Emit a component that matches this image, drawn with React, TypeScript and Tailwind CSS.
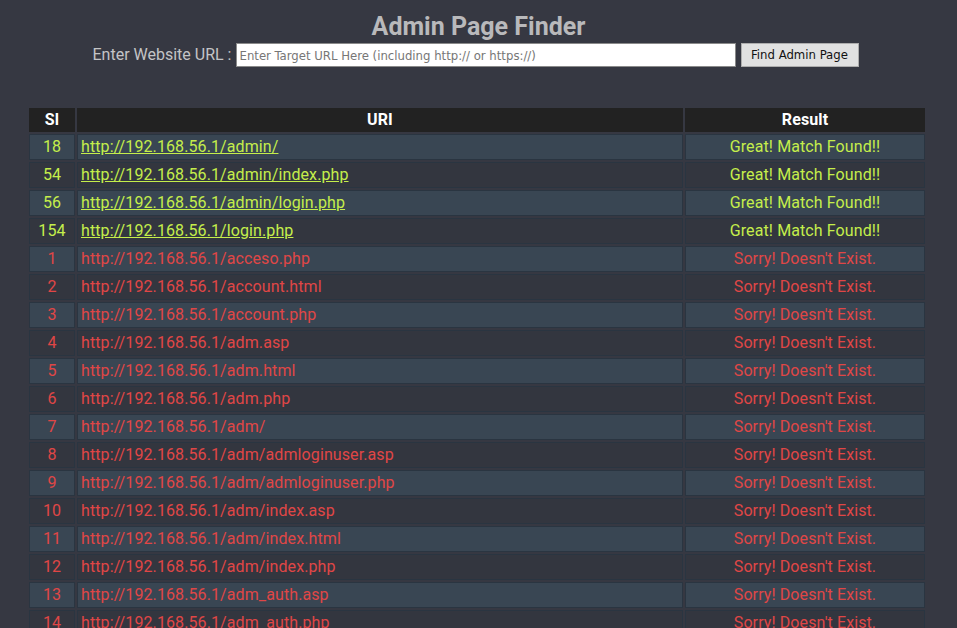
import React from "react";

const found = [
  [18, "http://192.168.56.1/admin/"],
  [54, "http://192.168.56.1/admin/index.php"],
  [56, "http://192.168.56.1/admin/login.php"],
  [154, "http://192.168.56.1/login.php"],
] as const;

const missing = [
  "acceso.php",
  "account.html",
  "account.php",
  "adm.asp",
  "adm.html",
  "adm.php",
  "adm/",
  "adm/admloginuser.asp",
  "adm/admloginuser.php",
  "adm/index.asp",
  "adm/index.html",
  "adm/index.php",
  "adm_auth.asp",
  "adm_auth.php",
];

export default function App() {
  const rows = [
    ...found.map(([n, u]) => ({ n, u, ok: true })),
    ...missing.map((m, i) => ({ n: i + 1, u: "http://192.168.56.1/" + m, ok: false })),
  ];
  return (
    <div
      className="w-full bg-[#363842]"
      style={{ fontFamily: "Roboto, 'Liberation Sans', sans-serif" }}
    >
      <div className="h-[628px] overflow-hidden">
        <h1 className="pt-[12px] text-center text-[25px] leading-[30px] font-bold text-[#b9b9bb]">
          Admin Page Finder
        </h1>
        <div className="mt-[1px] flex items-center justify-center pr-[6px]">
          <span className="text-[16px] text-[#c4c4c6] mr-[4px]">Enter Website URL :</span>
          <input
            className="w-[500px] h-[24px] bg-white border border-[#8a8a8a] px-[3px] text-[13px] text-[#222] placeholder:text-[#767676] outline-none"
            style={{ fontFamily: "'DejaVu Sans Condensed', 'Liberation Sans Narrow', sans-serif" }}
            placeholder="Enter Target URL Here (including http:// or https://)"
          />
          <button
            className="ml-[5px] h-[24px] w-[118px] bg-[#e1e1e1] border border-[#adadad] text-[13px] text-[#111]"
            style={{ fontFamily: "'DejaVu Sans Condensed', 'Liberation Sans', sans-serif" }}
          >
            Find Admin Page
          </button>
        </div>
        <table className="mt-[39px] ml-[27px] w-[900px] border-separate border-spacing-[2px] text-[16px] tracking-[0.1px]">
          <thead>
            <tr className="h-[24px]">
              <th className="w-[46px] bg-[#222222] text-white font-bold p-0">Sl</th>
              <th className="w-[606px] bg-[#222222] text-white font-bold p-0">URI</th>
              <th className="bg-[#222222] text-white font-bold p-0">Result</th>
            </tr>
          </thead>
          <tbody>
            {rows.map((r, i) => {
              const bg = i % 2 === 0 ? "bg-[#394653]" : "bg-[#33363f]";
              const color = r.ok ? "text-[#c5ee4b]" : "text-[#e04646]";
              return (
                <tr key={i} className="h-[26px]">
                  <td className={`${bg} ${color} border border-[#2a3541] text-center p-0 leading-[24px]`}>{r.n}</td>
                  <td className={`${bg} ${color} border border-[#2a3541] pl-[3px] p-0 leading-[24px]`}>
                    {r.ok ? <a className="underline">{r.u}</a> : r.u}
                  </td>
                  <td className={`${bg} ${color} border border-[#2a3541] text-center p-0 leading-[24px]`}>
                    {r.ok ? "Great! Match Found!!" : "Sorry! Doesn't Exist."}
                  </td>
                </tr>
              );
            })}
          </tbody>
        </table>
      </div>
    </div>
  );
}
